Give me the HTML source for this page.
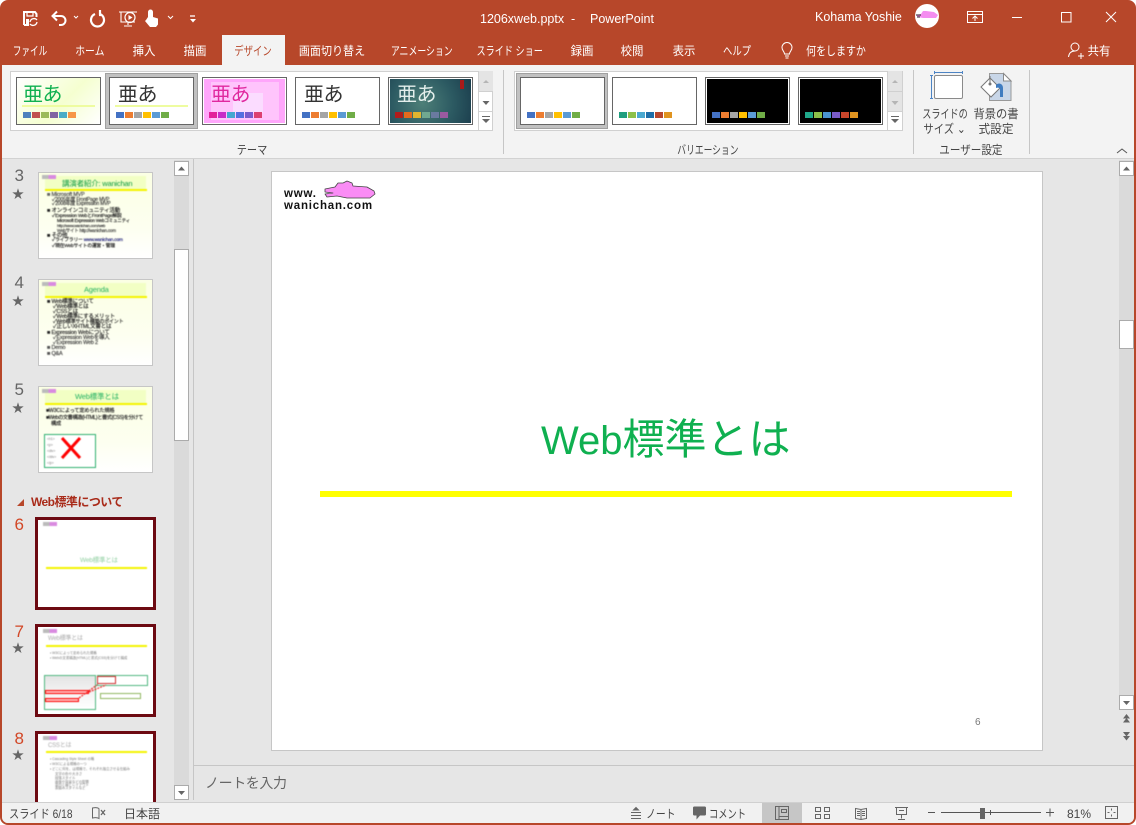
<!DOCTYPE html>
<html lang="ja"><head><meta charset="utf-8"><title>1206xweb.pptx - PowerPoint</title>
<style>
html,body{margin:0;padding:0;background:#fff}
#r{position:relative;width:1136px;height:825px;overflow:hidden;background:#B7472A;border-radius:8px;font-family:"Liberation Sans","Noto Sans CJK JP",sans-serif;color:#444}
#r div,#r svg{position:absolute}
.t{white-space:nowrap;line-height:1}
.tab{top:44px;font-size:12px;color:#fff;white-space:nowrap;line-height:14px;width:0;display:flex;justify-content:center}
.tab span{display:block;flex:none;transform:scaleX(var(--s,1))}
.g{font-size:12px;white-space:nowrap;line-height:14px;color:#444;width:0;display:flex;justify-content:center}
.g span{display:block;flex:none;transform:scaleX(var(--s,.8))}
.th{box-sizing:border-box;border:1px solid #666;background:#fff;top:77px;height:48px}
.sel{box-sizing:border-box;background:#c1c1c1;border:1px solid #a0a0a0;top:73px;height:56px}
.sw{top:34px;left:0;height:6px;width:8px}
.aa{left:8px;top:4px;font-size:20px;line-height:26px;white-space:nowrap;letter-spacing:-.5px}
.sb{box-sizing:border-box;background:#fff;border:1px solid #ababab}
.num{left:0;width:24px;text-align:right;font-size:17px;line-height:18px;color:#666}
.star{left:12px;font-size:12px;line-height:12px;color:#666}
.thumb{box-sizing:border-box;border:1px solid #c6c6c6;left:38px;width:115px;height:87px;overflow:hidden;background:linear-gradient(180deg,#fbffe4,#fdfff0 65%,#ffffff)}
.big{box-sizing:border-box;border:3px solid #6d0a12;left:35px;width:121px;height:93px;background:#fff;overflow:hidden}
.blur{left:0;top:0;width:100%;height:100%;filter:blur(.5px)}
.band{left:6px;top:3px;width:101px;height:14px;background:#f2ffc4}
.yl{left:6px;top:16px;width:102px;height:2px;background:#f4f400}
.lg{left:3px;top:2px;width:14px;height:4px;background:linear-gradient(90deg,#bbb 45%,#d98ae0 45%)}
.l{font-size:5.500px;line-height:6px;white-space:nowrap;color:#222;-webkit-text-stroke:.15px #222;letter-spacing:-.2px}
.m{font-size:3.400px;line-height:4px;white-space:nowrap;color:#777}
.st{font-size:12px;top:807px;line-height:14px;color:#444;white-space:nowrap;transform-origin:0 50%}
</style></head><body><div id="r">

<!-- main backgrounds -->
<div style="left:2px;top:65px;width:1132px;height:758px;background:#E6E6E6;border-radius:0 0 6px 6px"></div>
<div style="left:2px;top:65px;width:1132px;height:93px;background:#F3F3F3"></div>
<div style="left:2px;top:158px;width:1132px;height:1px;background:#d2d2d2"></div>

<!-- QAT -->
<svg style="left:20px;top:8px" width="190" height="20" viewBox="0 0 190 20" fill="none" stroke="#fff" stroke-width="1.500">
 <path d="M4 17V4h11l1.500 2v3M4 17h5" stroke-width="2"/><path d="M7 4v4h6V4" stroke-width="1.200"/><rect x="6" y="11" width="3" height="5" fill="#fff" stroke="none"/>
 <path d="M10 14a4 4 0 0 1 7-2M17 14a4 4 0 0 1-7 2" stroke-width="1.300"/>
 <path d="M33 8h8a4.500 4.500 0 0 1 0 9h-2M37 3.500L32.500 8l4.500 4.500" stroke-width="2"/>
 <path d="M54 8l2 2 2-2" stroke-width="1"/>
 <path d="M75 6a6.500 6.500 0 1 0 5 0M80 2v5h-1" stroke-width="2.200"/>
 <path d="M99 4h18M101 4v10h14M108 14v3M104 18h8" stroke-width="1.100"/><circle cx="110" cy="9.500" r="5" stroke-width="1.200"/><path d="M108.500 7v5l4-2.500z" fill="#fff" stroke="none"/>
 <path d="M128 9V4a2.500 2.500 0 0 1 5 0v5l5 1.500v6l-2 2.500h-6l-5-6 1-1z" fill="#fff" stroke="none"/>
 <path d="M148 8l2.500 2.500L153 8" stroke-width="1"/>
 <path d="M170 8h5" stroke-width="1.300"/><path d="M170 11h6l-3 3.500z" fill="#fff" stroke="none"/>
</svg>

<!-- title -->
<div class="t" style="left:480px;top:12px;font-size:12.500px;color:#fff;line-height:14px">1206xweb.pptx</div>
<div class="t" style="left:571px;top:12px;font-size:12.500px;color:#fff;line-height:14px">-</div>
<div class="t" style="left:590px;top:12px;font-size:12.500px;color:#fff;line-height:14px">PowerPoint</div>
<div class="t" style="left:815px;top:10px;font-size:12.500px;color:#fff;line-height:14px">Kohama Yoshie</div>
<div style="left:915px;top:4px;width:24px;height:24px;border-radius:50%;background:#fff;overflow:hidden">
 <svg style="left:0;top:4px" width="24" height="14" viewBox="0 0 24 14"><path d="M1 7l5-1 2-3h3l8 1 4 3-2 3H8L3 9z" fill="#f48df0"/><path d="M1 7h5M2 9h3" stroke="#222" stroke-width="1"/></svg>
</div>
<svg style="left:965px;top:8px" width="160" height="18" viewBox="0 0 160 18" fill="none" stroke="#fff" stroke-width="1">
 <path d="M2.500 3.500h15v11h-15zM2.500 6.500h15"/><path d="M10 13V8M7.500 10.500L10 8l2.500 2.500"/>
 <path d="M47 9.500h10"/><rect x="96.500" y="4.500" width="9.500" height="9.500"/><path d="M141 4l10 10M151 4l-10 10"/>
</svg>

<!-- tabs -->
<div style="left:222px;top:35px;width:63px;height:30px;background:#F3F3F3"></div>
<div class="tab" style="left:30px;--s:.72"><span>ファイル</span></div>
<div class="tab" style="left:90px;--s:.82"><span>ホーム</span></div>
<div class="tab" style="left:144px;--s:.95"><span>挿入</span></div>
<div class="tab" style="left:195px;--s:.95"><span>描画</span></div>
<div class="tab" style="left:253px;--s:.78;color:#B7472A"><span>デザイン</span></div>
<div class="tab" style="left:332px;--s:.92"><span>画面切り替え</span></div>
<div class="tab" style="left:422px;--s:.74"><span>アニメーション</span></div>
<div class="tab" style="left:510px;--s:.76"><span>スライド ショー</span></div>
<div class="tab" style="left:582px;--s:.95"><span>録画</span></div>
<div class="tab" style="left:632px;--s:.95"><span>校閲</span></div>
<div class="tab" style="left:684px;--s:.95"><span>表示</span></div>
<div class="tab" style="left:737px;--s:.78"><span>ヘルプ</span></div>
<svg style="left:779px;top:41px" width="16" height="20" viewBox="0 0 16 20" fill="none" stroke="#fff" stroke-width="1"><path d="M5.500 13c0-2.500-2.500-3.500-2.500-6.500a5 5 0 0 1 10 0c0 3-2.500 4-2.500 6.500zM6 15h4M6.500 17h3"/></svg>
<div class="tab" style="left:836px;--s:.83"><span>何をしますか</span></div>
<svg style="left:1067px;top:41px" width="18" height="18" viewBox="0 0 18 18" fill="none" stroke="#fff" stroke-width="1"><circle cx="8" cy="6" r="4"/><path d="M1.500 16c.5-4 3-6 6.500-6M11 15h6M14 12v6"/></svg>
<div class="tab" style="left:1099px;--s:.95"><span>共有</span></div>

<!-- theme gallery -->
<div style="left:10px;top:71px;width:483px;height:60px;box-sizing:border-box;background:#fff;border:1px solid #d0d0d0"></div>
<div class="sel" style="left:105px;width:93px"></div>

<div class="th" style="left:16px;width:85px;background:linear-gradient(135deg,#ffffff,#f5ffd0 55%,#ffffff)"><div class="aa" style="color:#0fb050;left:6px">亜あ</div><div style="left:5px;top:27px;width:73px;height:2px;background:#eefca0"></div>
 <div class="sw" style="left:6px;background:#4f81bd"></div><div class="sw" style="left:15px;background:#c0504d"></div><div class="sw" style="left:24px;background:#9bbb59"></div><div class="sw" style="left:33px;background:#8064a2"></div><div class="sw" style="left:42px;background:#4bacc6"></div><div class="sw" style="left:51px;background:#f79646"></div></div>

<div class="th" style="left:109px;width:85px"><div class="aa" style="color:#333">亜あ</div><div style="left:5px;top:27px;width:73px;height:2px;background:#eefca0"></div>
 <div class="sw" style="left:6px;background:#4472c4"></div><div class="sw" style="left:15px;background:#ed7d31"></div><div class="sw" style="left:24px;background:#a5a5a5"></div><div class="sw" style="left:33px;background:#ffc000"></div><div class="sw" style="left:42px;background:#5b9bd5"></div><div class="sw" style="left:51px;background:#70ad47"></div></div>

<div class="th" style="left:202px;width:85px;background:#ffa6fb;box-shadow:inset 0 0 0 1px #fff"><div style="left:8px;top:4px;width:68px;height:38px;background:#ffc4fc"></div><div style="left:30px;top:15px;width:30px;height:20px;background:#fbdcff"></div><div class="aa" style="color:#e0289f">亜あ</div>
 <div class="sw" style="left:6px;background:#e3229a"></div><div class="sw" style="left:15px;background:#c82dc8"></div><div class="sw" style="left:24px;background:#44a8d0"></div><div class="sw" style="left:33px;background:#5570e0"></div><div class="sw" style="left:42px;background:#7a5ccc"></div><div class="sw" style="left:51px;background:#dc4070"></div></div>

<div class="th" style="left:295px;width:85px"><div class="aa" style="color:#333">亜あ</div>
 <div class="sw" style="left:6px;background:#4472c4"></div><div class="sw" style="left:15px;background:#ed7d31"></div><div class="sw" style="left:24px;background:#a5a5a5"></div><div class="sw" style="left:33px;background:#ffc000"></div><div class="sw" style="left:42px;background:#5b9bd5"></div><div class="sw" style="left:51px;background:#70ad47"></div></div>

<div class="th" style="left:388px;width:85px;background:radial-gradient(circle at 40% 55%,#4d7f78,#2c5a62 55%,#1a3c4c);box-shadow:inset 0 0 0 1px #fff"><div class="aa" style="color:#e4efec">亜あ</div><div style="left:71px;top:2px;width:4px;height:9px;background:#a81a1a"></div>
 <div class="sw" style="left:6px;background:#b01c1c"></div><div class="sw" style="left:15px;background:#e56a1e"></div><div class="sw" style="left:24px;background:#e0b430"></div><div class="sw" style="left:33px;background:#70a890"></div><div class="sw" style="left:42px;background:#6a7aa0"></div><div class="sw" style="left:51px;background:#9a5aa0"></div></div>

<!-- theme scroll buttons -->
<div style="left:479px;top:71px;width:14px;height:20px;background:#e4e4e4"></div>
<div style="left:479px;top:91px;width:14px;height:1px;background:#d0d0d0"></div>
<div style="left:479px;top:111px;width:14px;height:1px;background:#d0d0d0"></div>
<div style="left:478px;top:71px;width:1px;height:60px;background:#d0d0d0"></div>
<svg style="left:479px;top:71px" width="14" height="60" viewBox="0 0 14 60" fill="#666"><path d="M4 12l3-3 3 3z" fill="#b5b5b5"/><path d="M3.500 30h7L7 34z"/><path d="M3 45h8v1H3zM3 48h8l-4 4z"/></svg>

<div style="left:503px;top:70px;width:1px;height:84px;background:#c6c6c6"></div>

<!-- variation gallery -->
<div style="left:514px;top:71px;width:389px;height:60px;box-sizing:border-box;background:#fff;border:1px solid #d0d0d0"></div>
<div class="sel" style="left:516px;width:92px"></div>
<div class="th" style="left:520px;width:85px"><div class="sw" style="left:6px;background:#4472c4"></div><div class="sw" style="left:15px;background:#ed7d31"></div><div class="sw" style="left:24px;background:#a5a5a5"></div><div class="sw" style="left:33px;background:#ffc000"></div><div class="sw" style="left:42px;background:#5b9bd5"></div><div class="sw" style="left:51px;background:#70ad47"></div></div>
<div class="th" style="left:612px;width:85px"><div class="sw" style="left:6px;background:#1f9e7e"></div><div class="sw" style="left:15px;background:#8cc04a"></div><div class="sw" style="left:24px;background:#4aa8d0"></div><div class="sw" style="left:33px;background:#1f6ea8"></div><div class="sw" style="left:42px;background:#b8462c"></div><div class="sw" style="left:51px;background:#e09420"></div></div>
<div class="th" style="left:705px;width:85px;background:#000;box-shadow:inset 0 0 0 1px #fff"><div class="sw" style="left:6px;background:#4472c4"></div><div class="sw" style="left:15px;background:#ed7d31"></div><div class="sw" style="left:24px;background:#a5a5a5"></div><div class="sw" style="left:33px;background:#ffc000"></div><div class="sw" style="left:42px;background:#5b9bd5"></div><div class="sw" style="left:51px;background:#70ad47"></div></div>
<div class="th" style="left:798px;width:85px;background:#000;box-shadow:inset 0 0 0 1px #fff"><div class="sw" style="left:6px;background:#1fa88a"></div><div class="sw" style="left:15px;background:#8cc04a"></div><div class="sw" style="left:24px;background:#4a94d0"></div><div class="sw" style="left:33px;background:#7a5cc8"></div><div class="sw" style="left:42px;background:#c8462c"></div><div class="sw" style="left:51px;background:#e09420"></div></div>
<div style="left:888px;top:71px;width:14px;height:40px;background:#e4e4e4"></div>
<div style="left:888px;top:91px;width:14px;height:1px;background:#d0d0d0"></div>
<div style="left:888px;top:111px;width:14px;height:1px;background:#d0d0d0"></div>
<div style="left:887px;top:71px;width:1px;height:60px;background:#d0d0d0"></div>
<svg style="left:888px;top:71px" width="14" height="60" viewBox="0 0 14 60" fill="#666"><path d="M4 12l3-3 3 3z" fill="#b5b5b5"/><path d="M3.500 30h7L7 34z" fill="#b5b5b5"/><path d="M3 45h8v1H3zM3 48h8l-4 4z"/></svg>

<div style="left:913px;top:70px;width:1px;height:84px;background:#c6c6c6"></div>
<div style="left:1029px;top:70px;width:1px;height:84px;background:#c6c6c6"></div>

<!-- size & background icons -->
<svg style="left:928px;top:68px" width="90" height="36" viewBox="0 0 90 36" fill="none">
 <rect x="6.500" y="7.500" width="28" height="23" rx="1.500" fill="#fff" stroke="#8a8a8a"/>
 <path d="M6.500 4.500h28M6.500 3v3M34.500 3v3M3.500 7.500v23M2 7.500h3M2 30.500h3" stroke="#4d84c4"/>
 <path d="M61.500 5.500h14l7.500 7.500v19.500H61.500z" fill="#c8d6e8" stroke="#999"/><path d="M75.500 5.500v7.500H83z" fill="#fff" stroke="#8a8a8a"/>
 <path d="M53 19l9-9 10 10-9 9z" fill="#fff" stroke="#777"/><path d="M62 8v8" stroke="#777"/><circle cx="62" cy="16" r="1.500" fill="#777"/>
 <path d="M68 17c3-3 7-1 7 3v9h-3v-8c0-1-2-2-4-1z" fill="#3f7cc0"/>
</svg>
<div class="g" style="left:945px;top:107px;--s:.76"><span>スライドの</span></div>
<div class="g" style="left:945px;top:122px;--s:.86"><span>サイズ ⌄</span></div>
<div class="g" style="left:996px;top:107px;--s:.94"><span>背景の書</span></div>
<div class="g" style="left:996px;top:122px;--s:.97"><span>式設定</span></div>

<div class="g" style="left:252px;top:143px;--s:.85"><span>テーマ</span></div>
<div class="g" style="left:708px;top:143px;--s:.73"><span>バリエーション</span></div>
<div class="g" style="left:971px;top:143px;--s:.88"><span>ユーザー設定</span></div>
<svg style="left:1115px;top:146px" width="14" height="10" viewBox="0 0 14 10" fill="none" stroke="#555"><path d="M2 7l5-4 5 4"/></svg>

<!-- thumbnail pane -->
<div class="num" style="top:167px">3</div><div class="star" style="top:188px">★</div>
<div class="thumb" style="top:172px"><div class="blur">
 <div class="band"></div><div class="yl"></div><div class="lg"></div>
 <div class="l" style="left:23px;top:6px;font-size:7.500px;line-height:9px;color:#0a9a40;-webkit-text-stroke:0">講演者紹介: wanichan</div>
 <div class="l" style="left:8px;top:19px;color:#666">■ Microsoft MVP</div>
 <div class="l" style="left:13px;top:24px;color:#555;font-size:5px">✓2005年度 FrontPage MVP</div>
 <div class="l" style="left:13px;top:28px;color:#555;font-size:5px">✓2008年度 Expression MVP</div>
 <div class="l" style="left:8px;top:35px">■ オンラインコミュニティ活動</div>
 <div class="l" style="left:13px;top:41px;font-size:4.800px">✓Expression WebとFrontPage解説</div>
 <div class="l" style="left:18px;top:45px;font-size:4.500px">Microsoft Expression Webコミュニティ</div>
 <div class="l" style="left:18px;top:50px;font-size:4px;color:#777">http://www.wanichan.com/web</div>
 <div class="l" style="left:18px;top:55px;font-size:4.500px;color:#666">Webサイト http://wanichan.com</div>
 <div class="l" style="left:8px;top:60px">■ その他</div>
 <div class="l" style="left:13px;top:65px;font-size:4.800px">✓ライブラリー <span style="color:#22f">www.wanichan.com</span></div>
 <div class="l" style="left:13px;top:71px;font-size:4.800px">✓現在Webサイトの運営・管理</div>
</div></div>

<div class="num" style="top:274px">4</div><div class="star" style="top:295px">★</div>
<div class="thumb" style="top:279px"><div class="blur">
 <div class="band"></div><div class="yl"></div><div class="lg"></div>
 <div class="l" style="left:45px;top:5px;font-size:7.500px;line-height:9px;color:#25b060;-webkit-text-stroke:0">Agenda</div>
 <div class="l" style="left:8px;top:19px">■ Web標準について</div>
 <div class="l" style="left:14px;top:24px">✓Web標準とは</div>
 <div class="l" style="left:14px;top:29px">✓CSSとは</div>
 <div class="l" style="left:14px;top:34px">✓Web標準にするメリット</div>
 <div class="l" style="left:14px;top:39px;font-size:5px">✓Web標準サイト構築のポイント</div>
 <div class="l" style="left:14px;top:44px">✓正しいXHTML文書とは</div>
 <div class="l" style="left:8px;top:50px">■ Expression Webについて</div>
 <div class="l" style="left:14px;top:55px;color:#555">✓Expression Webを導入</div>
 <div class="l" style="left:14px;top:60px;color:#555">✓Expression Web 2</div>
 <div class="l" style="left:8px;top:65px;color:#555">■ Demo</div>
 <div class="l" style="left:8px;top:71px;color:#555">■ Q&amp;A</div>
</div></div>

<div class="num" style="top:381px">5</div><div class="star" style="top:402px">★</div>
<div class="thumb" style="top:386px"><div class="blur">
 <div class="band"></div><div class="yl"></div><div class="lg"></div>
 <div class="l" style="left:36px;top:5px;font-size:7.500px;line-height:9px;color:#20b060;-webkit-text-stroke:0">Web標準とは</div>
 <div class="l" style="left:7px;top:21px;font-size:5.200px">■W3Cによって定められた規格</div>
 <div class="l" style="left:7px;top:28px;font-size:5.200px;letter-spacing:-.4px">■Webの文書構造(HTML)と書式(CSS)を分けて</div>
 <div class="l" style="left:12px;top:34px;font-size:5.200px">構成</div>
 <div style="left:5px;top:47px;width:52px;height:34px;box-sizing:border-box;border:1px solid #30b070;background:#fff"></div>
 <div class="m" style="left:8px;top:50px">&lt;h1&gt;</div><div class="m" style="left:8px;top:56px">&lt;p&gt;</div><div class="m" style="left:8px;top:62px">&lt;div&gt;</div><div class="m" style="left:8px;top:68px">&lt;/div&gt;</div><div class="m" style="left:8px;top:74px">&lt;/p&gt;</div>
 <svg style="left:22px;top:50px" width="20" height="22" viewBox="0 0 20 22" stroke="#f00" stroke-width="3"><path d="M1 1l18 20M19 1L1 21"/></svg>
</div></div>

<!-- section -->
<svg style="left:16px;top:498px" width="9" height="9" viewBox="0 0 9 9"><path d="M1 8h7V1z" fill="#b7472a"/></svg>
<div class="t" style="left:31px;top:495px;font-size:12px;font-weight:bold;color:#a92b1a;line-height:14px;letter-spacing:-.55px">Web標準について</div>

<div class="num" style="top:516px;color:#d24726">6</div>
<div class="big" style="top:517px"><div class="blur">
 <div class="lg" style="left:5px"></div>
 <div class="l" style="left:42px;top:37px;font-size:6.500px;line-height:8px;color:#8fcfa0;-webkit-text-stroke:0">Web標準とは</div>
 <div style="left:8px;top:47px;width:101px;height:2px;background:#f4f400"></div>
</div></div>

<div class="num" style="top:623px;color:#d24726">7</div><div class="star" style="top:642px">★</div>
<div class="big" style="top:624px"><div class="blur">
 <div class="lg" style="left:5px"></div>
 <div class="l" style="left:10px;top:9px;font-size:6px;line-height:7px;color:#aaa;-webkit-text-stroke:0">Web標準とは</div>
 <div style="left:8px;top:18px;width:101px;height:1.500px;background:#f4f400"></div>
 <div class="m" style="left:12px;top:24px">• W3Cによって定められた規格</div>
 <div class="m" style="left:12px;top:29px">• Webの文書構造(HTML)と書式(CSS)を分けて構成</div>
 <div style="left:6px;top:48px;width:52px;height:35px;box-sizing:border-box;border:1.500px solid #50b880;background:linear-gradient(#e4e4e4,#f4f4f4 50%,#fff)"></div>
 <div style="left:59px;top:48px;width:51px;height:11px;box-sizing:border-box;border:1.500px solid #50b880"></div>
 <div style="left:59px;top:49px;width:19px;height:8px;box-sizing:border-box;border:1px solid #d03030"></div>
 <div style="left:62px;top:66px;width:41px;height:5.500px;box-sizing:border-box;border:1px solid #90b860"></div>
 <div style="left:7px;top:63px;width:44px;height:4px;box-sizing:border-box;border:1px solid #f00;background:#fbb"></div>
 <div style="left:7px;top:71px;width:34px;height:4px;box-sizing:border-box;border:1px solid #f00;background:#fbb"></div>
 <svg style="left:40px;top:52px" width="30" height="22" viewBox="0 0 30 22"><path d="M1 19L19 6M11 13L28 6" stroke="#f03030" stroke-width="1.300" stroke-dasharray="2 1" fill="none"/></svg>
</div></div>

<div class="num" style="top:730px;color:#d24726">8</div><div class="star" style="top:749px">★</div>
<div class="big" style="top:731px;height:80px;border-bottom:0"><div class="blur">
 <div class="lg" style="left:5px"></div>
 <div class="l" style="left:10px;top:9px;font-size:6px;line-height:7px;color:#aaa;-webkit-text-stroke:0">CSSとは</div>
 <div style="left:8px;top:17px;width:101px;height:1.500px;background:#f4f400"></div>
 <div class="m" style="left:12px;top:23px">• Cascading Style Sheet の略</div>
 <div class="m" style="left:12px;top:28px">• W3Cによる規格の一つ</div>
 <div class="m" style="left:12px;top:33px">• どこに何を、は規格で、それぞれ独立させる仕組み</div>
 <div class="m" style="left:17px;top:38px">文字の色や大きさ</div>
 <div class="m" style="left:17px;top:42px">段落スタイル</div>
 <div class="m" style="left:17px;top:46px">画像や背景などの配置</div>
 <div class="m" style="left:17px;top:49px">余白と線とレイアウト</div>
 <div class="m" style="left:17px;top:52px">表組みスタイルなど</div>
</div></div>

<!-- left scrollbar -->
<div style="left:174px;top:160px;width:15px;height:640px;background:#DADADA"></div>
<div class="sb" style="left:174px;top:161px;width:15px;height:15px"></div>
<div class="sb" style="left:174px;top:249px;width:15px;height:192px"></div>
<div class="sb" style="left:174px;top:785px;width:15px;height:15px"></div>
<svg style="left:174px;top:161px" width="15" height="15" viewBox="0 0 15 15"><path d="M4 9.500l3.500-4 3.500 4z" fill="#666"/></svg>
<svg style="left:174px;top:785px" width="15" height="15" viewBox="0 0 15 15"><path d="M4 6h7l-3.500 4z" fill="#666"/></svg>
<div style="left:193px;top:159px;width:1px;height:641px;background:#c6c6c6"></div>

<!-- slide -->
<div style="left:271px;top:171px;width:772px;height:580px;box-sizing:border-box;background:#fff;border:1px solid #c6c6c6"></div>
<div class="t" style="left:284px;top:188px;font-size:11.500px;font-weight:bold;color:#111;line-height:13px;letter-spacing:.8px">www.</div>
<div class="t" style="left:284px;top:200px;font-size:11.500px;font-weight:bold;color:#111;line-height:13px;letter-spacing:.8px">wanichan.com</div>
<svg style="left:324px;top:180px" width="54" height="22" viewBox="0 0 54 22"><path d="M1 9L11 7 14 3 19 3 23 1 28 3 29 6 43 7 50 11 51 14 46 18 23 18 13 16 3 17 1 14 9 13 1 12z" fill="#fa8cf5" stroke="#444" stroke-width=".8" stroke-linejoin="round"/></svg>
<div class="t" style="left:541px;top:415px;font-size:40px;line-height:50px;color:#0fb050">Web<span style="font-size:42px">標準とは</span></div>
<div style="left:320px;top:491px;width:692px;height:6px;background:#ffff00"></div>
<div class="t" style="left:975px;top:717px;font-size:10px;line-height:11px;color:#777">6</div>

<!-- right scrollbar -->
<div style="left:1119px;top:160px;width:15px;height:550px;background:#DADADA"></div>
<div class="sb" style="left:1119px;top:161px;width:15px;height:15px"></div>
<div class="sb" style="left:1119px;top:320px;width:15px;height:29px"></div>
<div class="sb" style="left:1119px;top:695px;width:15px;height:15px"></div>
<svg style="left:1119px;top:161px" width="15" height="15" viewBox="0 0 15 15"><path d="M4 9.500l3.500-4 3.500 4z" fill="#666"/></svg>
<svg style="left:1119px;top:695px" width="15" height="15" viewBox="0 0 15 15"><path d="M4 6h7l-3.500 4z" fill="#666"/></svg>
<svg style="left:1119px;top:712px" width="15" height="30" viewBox="0 0 15 30" fill="#666"><path d="M4 6.500L7.500 2 11 6.500zM4 10.500L7.500 6 11 10.500zM4 20l3.500 4.500L11 20zM4 24l3.500 4.500L11 24z"/></svg>

<!-- notes -->
<div style="left:194px;top:765px;width:940px;height:1px;background:#c6c6c6"></div>
<div class="t" style="left:205px;top:775px;font-size:14px;line-height:16px;color:#666;letter-spacing:-.4px">ノートを入力</div>

<!-- status -->
<div style="left:2px;top:802px;width:1132px;height:21px;background:#F1F1F1;border-top:1px solid #d0d0d0;box-sizing:border-box;border-radius:0 0 6px 6px"></div>
<div class="st" style="left:9px;transform:scaleX(.85)">スライド 6/18</div>
<svg style="left:91px;top:805px" width="16" height="16" viewBox="0 0 16 16" fill="none" stroke="#666"><path d="M8 3.500C6.500 2.500 3.500 2.500 1.500 3v10c2-.5 5-.5 6.500.5V3.500"/><path d="M10 5l4 5M14 5l-4 5" stroke-width="1.300"/></svg>
<div class="st" style="left:124px">日本語</div>
<svg style="left:629px;top:806px" width="14" height="14" viewBox="0 0 14 14" fill="none" stroke="#666"><path d="M2 6.500h10M2 9.500h10M2 12.500h10"/><path d="M4.500 4L7 1.500 9.500 4z" fill="#666"/></svg>
<div class="st" style="left:646px;transform:scaleX(.82)">ノート</div>
<svg style="left:692px;top:805px" width="16" height="16" viewBox="0 0 16 16"><path d="M2 1.500h11a1.500 1.500 0 0 1 1 1v7a1.500 1.500 0 0 1-1 1H8l-3.500 4v-4H2a1.500 1.500 0 0 1-1-1v-7a1.500 1.500 0 0 1 1-1z" fill="#666"/></svg>
<div class="st" style="left:709px;transform:scaleX(.77)">コメント</div>
<div style="left:762px;top:803px;width:40px;height:20px;background:#c6c6c6"></div>
<svg style="left:775px;top:806px" width="140" height="15" viewBox="0 0 140 15" fill="none" stroke="#666">
 <path d="M.500.500h13v13H.500zM4 .500v13M4 10.500h9.500M6.500 3.500h5v3h-5z"/>
 <path d="M40.500 1.500h5v4h-5zM49.500 1.500h5v4h-5zM40.500 8.500h5v4h-5zM49.500 8.500h5v4h-5z"/>
 <path d="M80.500 2.500l5.500 1 5.500-1v10l-5.500 1-5.500-1zM86 3.500v10M82 5.500h3M82 7.500h3M82 9.500h3M87 5.500h3M87 7.500h3M87 9.500h3"/>
 <path d="M120 1.500h13M121.500 1.500v7h10v-7M124 4.500h5M126.500 8.500v4M123 13.500h7"/>
</svg>
<div style="left:928px;top:812px;width:7px;height:1px;background:#555"></div>
<div style="left:941px;top:812px;width:100px;height:1px;background:#555"></div>
<div style="left:980px;top:808px;width:5px;height:11px;background:#666"></div>
<div style="left:990px;top:810px;width:1px;height:5px;background:#555"></div>
<svg style="left:1045px;top:808px" width="10" height="10" viewBox="0 0 10 10" stroke="#555"><path d="M1 4.500h8M5 .500v8"/></svg>
<div class="st" style="left:1067px">81%</div>
<svg style="left:1105px;top:806px" width="14" height="14" viewBox="0 0 14 14" fill="none" stroke="#666"><path d="M.500.500h12v12H.500z"/><path d="M6.500 2.500v2M6.500 8.500v2M2.500 6.500h2M8.500 6.500h2"/></svg>

</div></body></html>
